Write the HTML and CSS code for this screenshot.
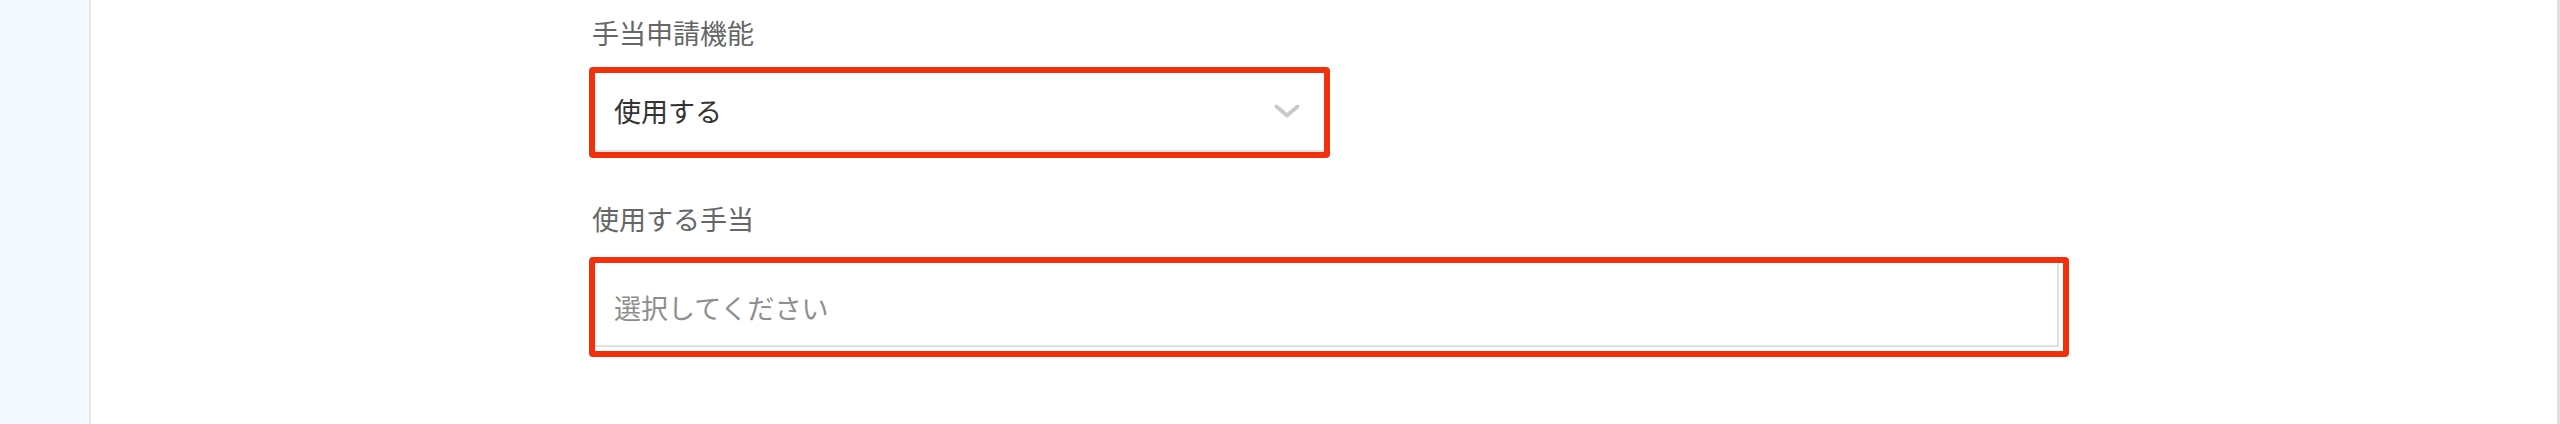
FILE: index.html
```html
<!DOCTYPE html>
<html lang="ja">

<head>
    <title>手当申請機能</title>
    <meta charset="utf-8">
    <meta name="viewport" content="width=device-width, initial-scale=1.0">

    <link rel="stylesheet" href="styles.css">
</head>

<body>

    <aside class="sidebar"></aside>

    <main class="content">
        <div class="form">

            <label class="label label-first">手当申請機能</label>
            <div class="mark mark-select">
                <div class="field select">
                    <span class="value">使用する</span>
                    <svg class="chevron" width="26" height="15" viewBox="0 0 26 15">
                        <polyline points="2.5,2.5 13,11.5 23.5,2.5" fill="none" stroke="#cacaca" stroke-width="4" stroke-linecap="round" stroke-linejoin="round" />
                    </svg>
                </div>
            </div>

            <label class="label label-second">使用する手当</label>
            <div class="mark mark-multi">
                <div class="field multi">
                    <span class="placeholder">選択してください</span>
                </div>
            </div>

        </div>
    </main>

</body>

</html>
```

FILE: styles.css
```css
html,
body {
    margin: 0;
    height: 100%;
}

body {
    display: flex;
    background-color: #ffffff;
    font-family: "Noto Sans CJK JP", "Noto Sans", sans-serif;
    font-size: 27px;
    line-height: 40px;
}

.sidebar {
    width: 89px;
    flex-shrink: 0;
    background-color: #f5faff;
    border-right: 2px solid #e4e7ea;
}

.content {
    flex: 1;
    border-right: 3px solid #dedede;
}

.form {
    padding-top: 13px;
    padding-left: 498px;
}

.label {
    display: block;
    padding-left: 3px;
    color: #666666;
}

.label-first {
    margin-bottom: 14px;
}

.label-second {
    margin-top: 41px;
    margin-bottom: 18px;
}

/* red annotation frame */
.mark {
    border: 6px solid #f3300c;
    border-radius: 4px;
    box-sizing: border-box;
}

.mark-select {
    width: 741px;
    height: 91px;
}

.mark-multi {
    width: 1480px;
    height: 100px;
    padding: 0 4px 4px 0;
}

.field {
    box-sizing: border-box;
    height: 100%;
    padding-left: 19px;
    border-bottom: 2px solid #e2e2e2;
}

.select {
    display: flex;
    align-items: flex-start;
    justify-content: space-between;
    padding-top: 18px;
    padding-right: 24px;
}

.value {
    color: #333333;
}

.chevron {
    margin-top: 13px;
}

.multi {
    padding-top: 25px;
    border-right: 2px solid #e2e2e2;
}

.placeholder {
    color: #8e8e8e;
}
```
